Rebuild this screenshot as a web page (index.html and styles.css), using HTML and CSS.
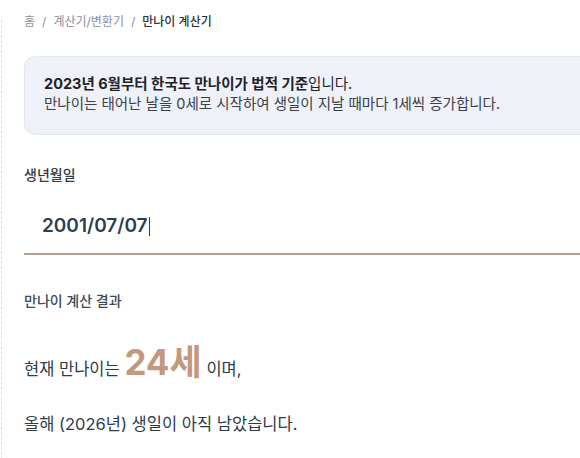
FILE: index.html
```html
<!DOCTYPE html>
<html lang="ko">
<head>
<meta charset="utf-8">
<title>만나이 계산기</title>
<link rel="stylesheet" href="styles.css">
</head>
<body>
<div class="layout">
  <div class="rail"></div>
  <main class="main">
    <nav class="crumbs">
      <span class="crumb">홈</span>
      <span class="sep">/</span>
      <span class="crumb">계산기/변환기</span>
      <span class="sep">/</span>
      <span class="crumb current">만나이 계산기</span>
    </nav>
    <div class="notice">
      <p class="notice-line"><strong>2023년 6월부터 한국도 만나이가 법적 기준</strong>입니다.</p>
      <p class="notice-line muted">만나이는 태어난 날을 0세로 시작하여 생일이 지날 때마다 1세씩 증가합니다.</p>
    </div>
    <label class="field-label">생년월일</label>
    <div class="date-input"><span class="value">2001/07/07</span><span class="caret"></span></div>
    <h2 class="result-title">만나이 계산 결과</h2>
    <p class="result-line first">현재 만나이는 <span class="age">24세</span> 이며,</p>
    <p class="result-line second">올해 (2026년) 생일이 아직 남았습니다.</p>
  </main>
</div>
</body>
</html>
```
FILE: styles.css
```css
html, body {
  margin: 0;
  padding: 0;
  background: #ffffff;
  overflow: hidden;
}
body {
  font-family: "Inter", "Noto Sans CJK KR", sans-serif;
  color: #2d3a4a;
}
.layout {
  display: flex;
  width: 700px;
}
.rail {
  flex: none;
  margin-left: 1px;
  margin-top: 20px;
  border-left: 1px dashed #dcdcdc;
  height: 460px;
}
.main {
  flex: none;
  width: 640px;
  padding-left: 22px;
}
.crumbs {
  margin-top: 13px;
  font-size: 12px;
  line-height: 18px;
  color: #8b9099;
  display: flex;
  gap: 7px;
}
.crumb.current {
  color: #2f3338;
  font-weight: 500;
}
.notice {
  margin-top: 25px;
  background: #eef1f7;
  border: 1px solid #e3e6ed;
  border-radius: 11px;
  padding: 17px 19px 20px;
}
.notice-line {
  margin: 0;
  font-size: 14.5px;
  line-height: 20px;
  color: #1f2329;
}
.notice-line strong {
  font-weight: 700;
}
.notice-line.muted {
  color: #3b4047;
}
.field-label {
  display: block;
  margin-top: 31px;
  font-size: 14px;
  line-height: 18px;
  font-weight: 500;
  color: #353b44;
}
.date-input {
  margin-top: 28px;
  padding-left: 18px;
  padding-bottom: 13px;
  border-bottom: 2px solid #b99f8e;
  display: flex;
  align-items: center;
  height: 28px;
}
.value {
  font-size: 19px;
  line-height: 28px;
  font-weight: 600;
  color: #2c3e50;
}
.caret {
  width: 1px;
  height: 19px;
  background: #2c3e50;
  margin-left: 1px;
}
.result-title {
  margin: 37px 0 0;
  font-size: 14px;
  line-height: 18px;
  font-weight: 500;
  color: #3d4a5c;
}
.result-line {
  margin: 0;
  font-size: 16.5px;
  line-height: 24px;
  color: #2d3a4a;
}
.result-line.first {
  margin-top: 40px;
}
.age {
  font-size: 35px;
  line-height: 24px;
  font-weight: 700;
  color: #c4987d;
}
.result-line.second {
  margin-top: 31px;
}
```
